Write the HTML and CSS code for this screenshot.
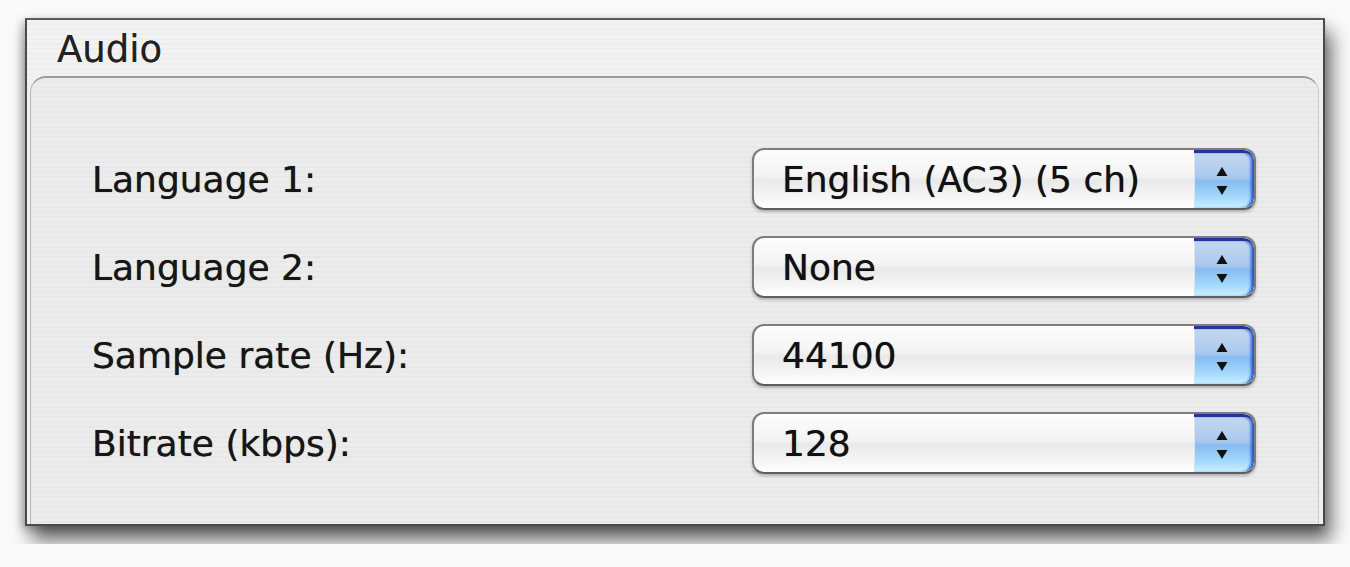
FILE: index.html
```html
<!DOCTYPE html>
<html>
<head>
<meta charset="utf-8">
<link rel="stylesheet" href="styles.css">
</head>
<body>
<div class="window">
  <div class="title">Audio</div>
  <div class="group">
    <div class="row">
      <span class="label">Language 1:</span>
      <div class="popup"><span class="value">English (AC3) (5 ch)</span><span class="stepper"><svg width="14" height="30" viewBox="0 0 14 30"><path d="M7 1 L12.5 10 L1.5 10 Z" fill="#111"/><path d="M7 29 L12.5 20 L1.5 20 Z" fill="#111"/></svg></span></div>
    </div>
    <div class="row">
      <span class="label">Language 2:</span>
      <div class="popup"><span class="value">None</span><span class="stepper"><svg width="14" height="30" viewBox="0 0 14 30"><path d="M7 1 L12.5 10 L1.5 10 Z" fill="#111"/><path d="M7 29 L12.5 20 L1.5 20 Z" fill="#111"/></svg></span></div>
    </div>
    <div class="row">
      <span class="label">Sample rate (Hz):</span>
      <div class="popup"><span class="value">44100</span><span class="stepper"><svg width="14" height="30" viewBox="0 0 14 30"><path d="M7 1 L12.5 10 L1.5 10 Z" fill="#111"/><path d="M7 29 L12.5 20 L1.5 20 Z" fill="#111"/></svg></span></div>
    </div>
    <div class="row">
      <span class="label">Bitrate (kbps):</span>
      <div class="popup"><span class="value">128</span><span class="stepper"><svg width="14" height="30" viewBox="0 0 14 30"><path d="M7 1 L12.5 10 L1.5 10 Z" fill="#111"/><path d="M7 29 L12.5 20 L1.5 20 Z" fill="#111"/></svg></span></div>
    </div>
  </div>
</div>
</body>
</html>
```
FILE: styles.css
```css
html, body {
  margin: 0;
  padding: 0;
}
body {
  background: #fafafa;
  padding: 18px 25px;
  font-family: "DejaVu Sans", "Liberation Sans", sans-serif;
  color: #1a1a1a;
}
.window {
  box-sizing: border-box;
  width: 1300px;
  height: 508px;
  border: 2px solid #4a4a4a;
  border-top-color: #5a5a5a;
  background: repeating-linear-gradient(to bottom, #f2f2f2 0, #f2f2f2 3px, #eeeeee 3px, #eeeeee 5px);
  box-shadow: 6px 14px 18px rgba(0,0,0,0.6), -3px 3px 8px rgba(0,0,0,0.25);
  display: flex;
  flex-direction: column;
}
.title {
  height: 52px;
  padding: 4px 0 0 30px;
  font-size: 37px;
  line-height: 52px;
  color: #222;
  text-shadow: 0 0 0.6px rgba(0,0,0,0.6);
}
.group {
  flex: 1;
  margin: 0 4px 0 3px;
  border-top: 2px solid #9c9c9c;
  border-left: 1px solid #b8b8b8;
  border-right: 1px solid #c8c8c8;
  border-radius: 16px 16px 0 0;
  background: repeating-linear-gradient(to bottom, #ececec 0, #ececec 3px, #e8e8e8 3px, #e8e8e8 5px);
  padding: 70px 62px 0 61px;
  display: flex;
  flex-direction: column;
  gap: 26px;
}
.row {
  display: flex;
  align-items: center;
  justify-content: space-between;
}
.label {
  font-size: 36px;
  color: #161616;
  text-shadow: 0 0 0.7px rgba(0,0,0,0.7);
}
.popup {
  box-sizing: border-box;
  width: 504px;
  height: 62px;
  border: 2px solid #7d7d7d;
  border-bottom-color: #5e5e5e;
  border-radius: 12px;
  background: linear-gradient(to bottom, #fdfdfd 0%, #f3f3f3 45%, #e9e9e9 52%, #f7f7f7 85%, #ffffff 100%);
  box-shadow: 0 2px 3px rgba(0,0,0,0.25);
  display: flex;
  align-items: center;
  overflow: hidden;
}
.value {
  flex: 1;
  padding-left: 28px;
  font-size: 36px;
  color: #111;
  text-shadow: 0 0 0.7px rgba(0,0,0,0.7);
}
.stepper {
  width: 60px;
  height: 100%;
  display: flex;
  align-items: center;
  justify-content: center;
  border-top: 3px solid #26339a;
  box-sizing: border-box;
  background: linear-gradient(to bottom, #c4d7ef 0%, #a9c7ec 45%, #86bcf2 52%, #a6dafd 82%, #caf0ff 100%);
  box-shadow: inset -4px 0 3px -1px #2a55d0, inset 1px 0 0 #d6e4f4;
  border-radius: 0 10px 10px 0;
}
.stepper svg {
  margin-left: -4px;
}
```
